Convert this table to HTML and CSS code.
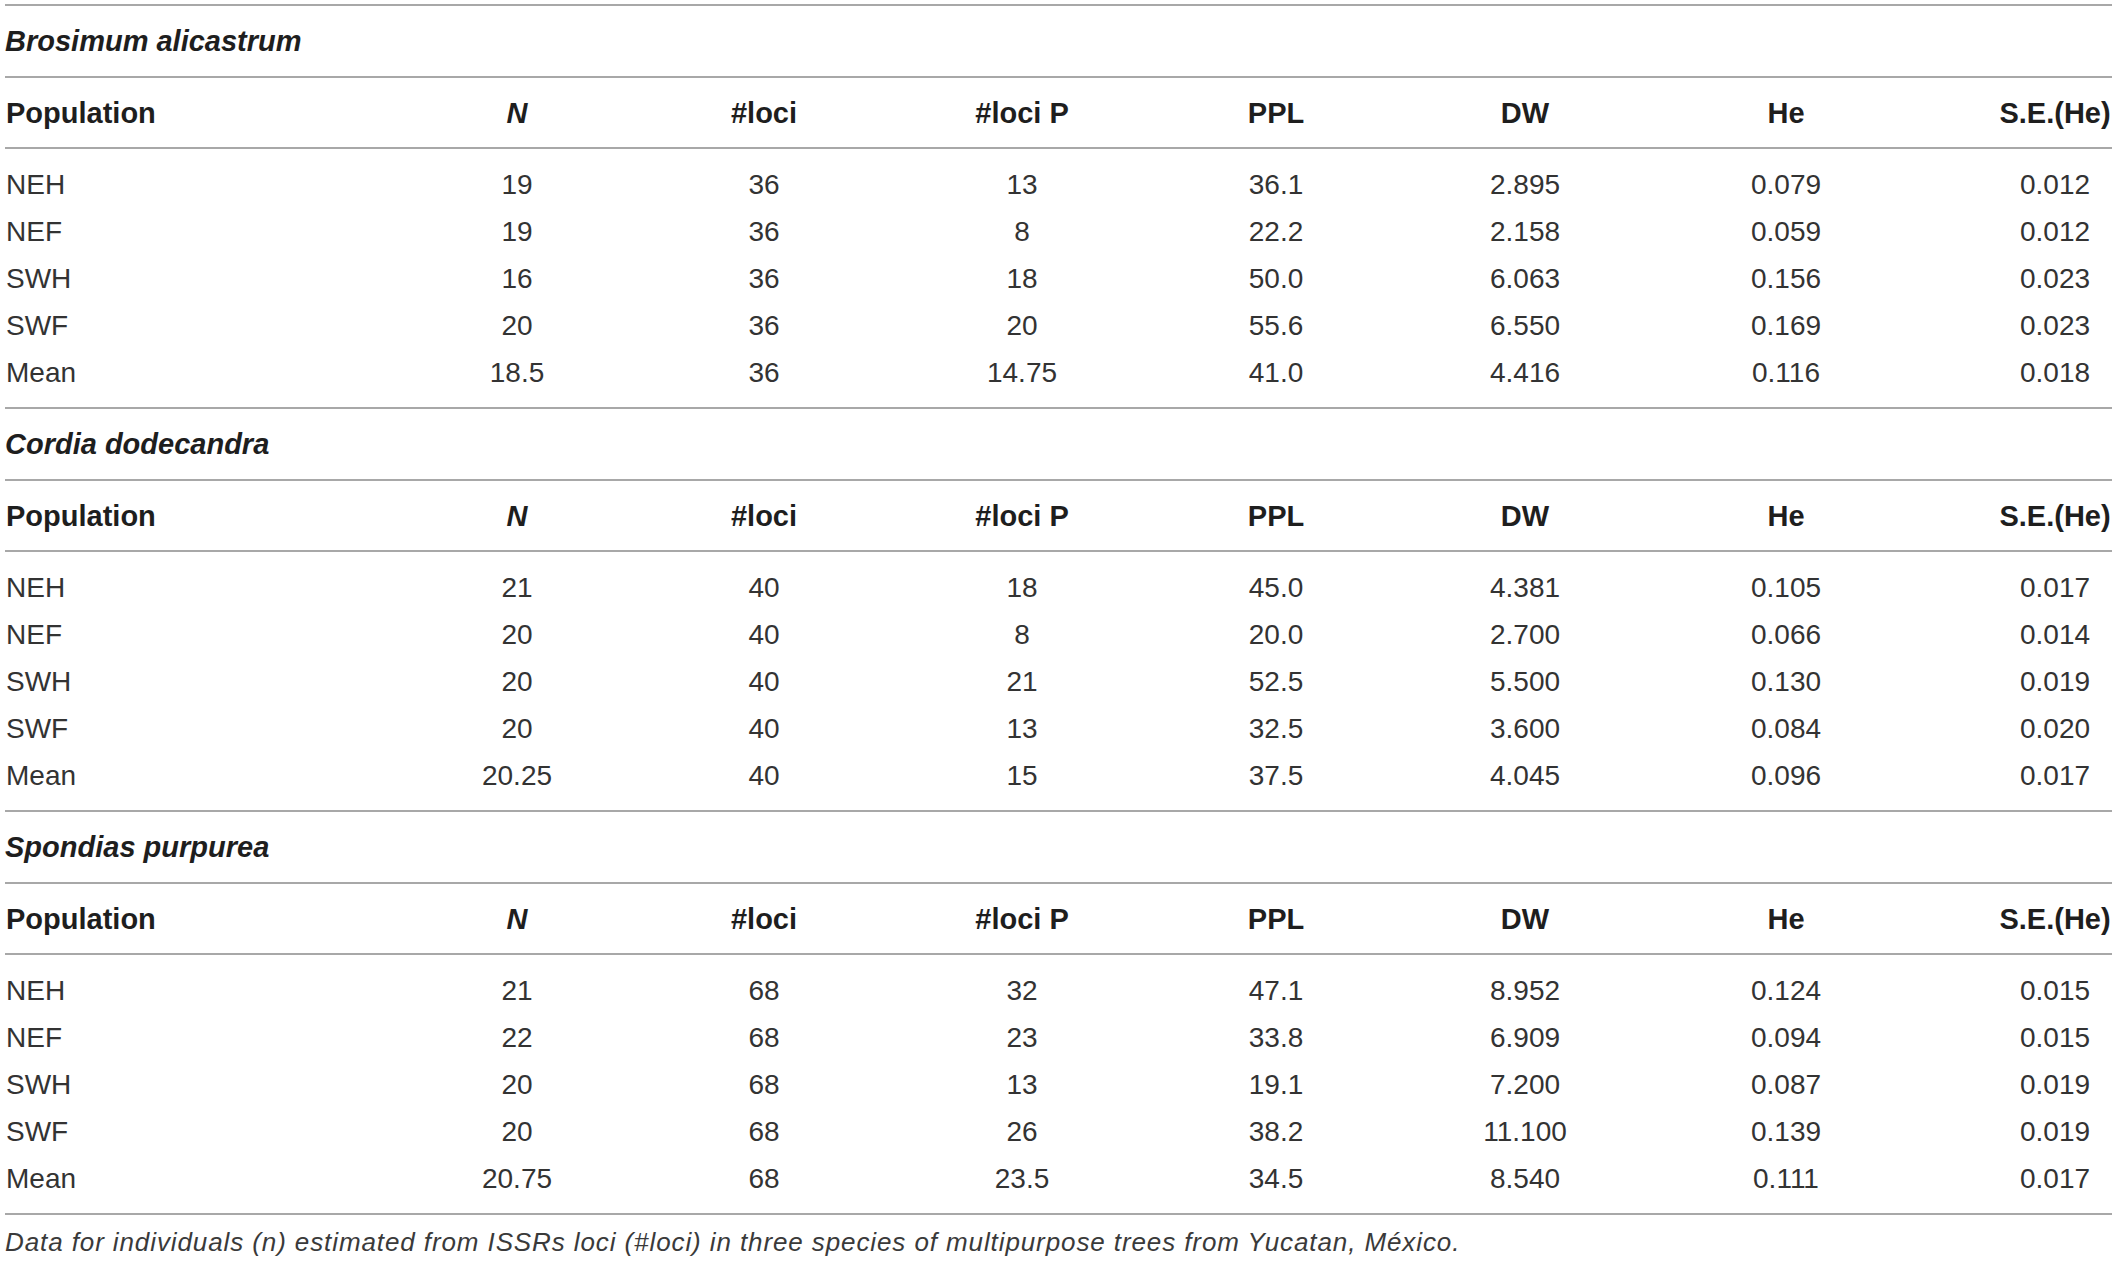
FILE: index.html
```html
<!DOCTYPE html>
<html lang="en">
<head>
    <meta charset="UTF-8">
    <meta name="viewport" content="width=device-width, initial-scale=1.0">
    <title>Genetic diversity of multipurpose trees</title>
    <link rel="stylesheet" href="styles.css">
</head>
<body>
    <table class="stats">
        <colgroup>
            <col class="c-pop">
            <col class="c-n">
            <col class="c-loci">
            <col class="c-locip">
            <col class="c-ppl">
            <col class="c-dw">
            <col class="c-he">
            <col class="c-se">
        </colgroup>

        <!-- Brosimum alicastrum -->
        <tr class="species top">
            <td colspan="8">Brosimum alicastrum</td>
        </tr>
        <tr class="head">
            <td class="pop">Population</td>
            <td><em>N</em></td>
            <td>#loci</td>
            <td>#loci P</td>
            <td>PPL</td>
            <td>DW</td>
            <td>He</td>
            <td class="se">S.E.(He)</td>
        </tr>
        <tr class="data first">
            <td class="pop">NEH</td><td>19</td><td>36</td><td>13</td><td>36.1</td><td>2.895</td><td>0.079</td><td class="se">0.012</td>
        </tr>
        <tr class="data">
            <td class="pop">NEF</td><td>19</td><td>36</td><td>8</td><td>22.2</td><td>2.158</td><td>0.059</td><td class="se">0.012</td>
        </tr>
        <tr class="data">
            <td class="pop">SWH</td><td>16</td><td>36</td><td>18</td><td>50.0</td><td>6.063</td><td>0.156</td><td class="se">0.023</td>
        </tr>
        <tr class="data">
            <td class="pop">SWF</td><td>20</td><td>36</td><td>20</td><td>55.6</td><td>6.550</td><td>0.169</td><td class="se">0.023</td>
        </tr>
        <tr class="data last">
            <td class="pop">Mean</td><td>18.5</td><td>36</td><td>14.75</td><td>41.0</td><td>4.416</td><td>0.116</td><td class="se">0.018</td>
        </tr>

        <!-- Cordia dodecandra -->
        <tr class="species">
            <td colspan="8">Cordia dodecandra</td>
        </tr>
        <tr class="head">
            <td class="pop">Population</td>
            <td><em>N</em></td>
            <td>#loci</td>
            <td>#loci P</td>
            <td>PPL</td>
            <td>DW</td>
            <td>He</td>
            <td class="se">S.E.(He)</td>
        </tr>
        <tr class="data first">
            <td class="pop">NEH</td><td>21</td><td>40</td><td>18</td><td>45.0</td><td>4.381</td><td>0.105</td><td class="se">0.017</td>
        </tr>
        <tr class="data">
            <td class="pop">NEF</td><td>20</td><td>40</td><td>8</td><td>20.0</td><td>2.700</td><td>0.066</td><td class="se">0.014</td>
        </tr>
        <tr class="data">
            <td class="pop">SWH</td><td>20</td><td>40</td><td>21</td><td>52.5</td><td>5.500</td><td>0.130</td><td class="se">0.019</td>
        </tr>
        <tr class="data">
            <td class="pop">SWF</td><td>20</td><td>40</td><td>13</td><td>32.5</td><td>3.600</td><td>0.084</td><td class="se">0.020</td>
        </tr>
        <tr class="data last">
            <td class="pop">Mean</td><td>20.25</td><td>40</td><td>15</td><td>37.5</td><td>4.045</td><td>0.096</td><td class="se">0.017</td>
        </tr>

        <!-- Spondias purpurea -->
        <tr class="species">
            <td colspan="8">Spondias purpurea</td>
        </tr>
        <tr class="head">
            <td class="pop">Population</td>
            <td><em>N</em></td>
            <td>#loci</td>
            <td>#loci P</td>
            <td>PPL</td>
            <td>DW</td>
            <td>He</td>
            <td class="se">S.E.(He)</td>
        </tr>
        <tr class="data first">
            <td class="pop">NEH</td><td>21</td><td>68</td><td>32</td><td>47.1</td><td>8.952</td><td>0.124</td><td class="se">0.015</td>
        </tr>
        <tr class="data">
            <td class="pop">NEF</td><td>22</td><td>68</td><td>23</td><td>33.8</td><td>6.909</td><td>0.094</td><td class="se">0.015</td>
        </tr>
        <tr class="data">
            <td class="pop">SWH</td><td>20</td><td>68</td><td>13</td><td>19.1</td><td>7.200</td><td>0.087</td><td class="se">0.019</td>
        </tr>
        <tr class="data">
            <td class="pop">SWF</td><td>20</td><td>68</td><td>26</td><td>38.2</td><td>11.100</td><td>0.139</td><td class="se">0.019</td>
        </tr>
        <tr class="data last">
            <td class="pop">Mean</td><td>20.75</td><td>68</td><td>23.5</td><td>34.5</td><td>8.540</td><td>0.111</td><td class="se">0.017</td>
        </tr>
    </table>

    <p class="note">Data for individuals (n) estimated from ISSRs loci (#loci) in three species of multipurpose trees from Yucatan, México.</p>
</body>
</html>
```

FILE: styles.css
```css
body {
    font-family: "Liberation Sans", Arial, sans-serif;
    background-color: #fff;
    color: #333;
    margin: 0;
    padding: 4px 5px 0 5px;
}

.stats {
    width: 2107px;
    table-layout: fixed;
    border-collapse: separate;
    border-spacing: 0;
    font-size: 28px;
}

.c-pop { width: 387px; }
.c-n { width: 250px; }
.c-loci { width: 244px; }
.c-locip { width: 272px; }
.c-ppl { width: 236px; }
.c-dw { width: 262px; }
.c-he { width: 260px; }
.c-se { width: 196px; }

.stats td {
    padding: 0;
    text-align: center;
    white-space: nowrap;
}

.stats td.pop {
    text-align: left;
    padding-left: 1px;
}

.stats td.se {
    padding-left: 82px;
}

/* species name rows */
.species td {
    font-weight: bold;
    font-style: italic;
    font-size: 29px;
    color: #1e1e1e;
    text-align: left;
    line-height: 34px;
    padding: 18px 0;
    border-bottom: 2px solid #a8a8a8;
}

.species.top td {
    border-top: 2px solid #a8a8a8;
}

/* column headings */
.head td {
    font-weight: bold;
    font-size: 29px;
    color: #1e1e1e;
    line-height: 34px;
    padding-top: 18px;
    padding-bottom: 17px;
    border-bottom: 2px solid #a8a8a8;
}

.head em {
    font-style: italic;
}

.data td {
    line-height: 47px;
}

.data.first td {
    padding-top: 12px;
}

.data.last td {
    padding-bottom: 11px;
    border-bottom: 2px solid #a8a8a8;
}

.note {
    margin: 12px 0 0 0;
    font-style: italic;
    font-size: 26px;
    letter-spacing: 0.9px;
    line-height: 30px;
    color: #3a3a3a;
}
```
